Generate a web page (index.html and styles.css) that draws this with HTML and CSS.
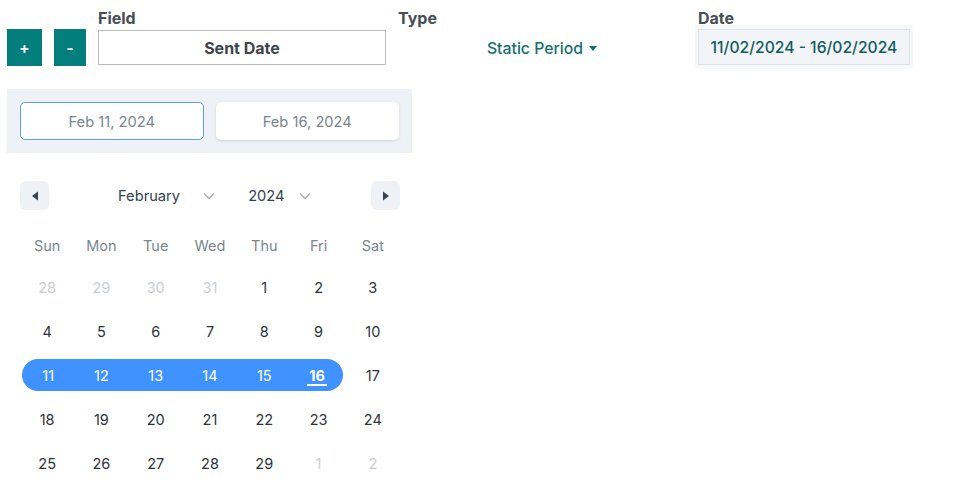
FILE: index.html
```html
<!DOCTYPE html>
<html>
<head>
<meta charset="utf-8">
<link rel="stylesheet" href="styles.css">
</head>
<body>
<div class="toolbar">
  <button class="tbtn plus">+</button>
  <button class="tbtn minus">-</button>
  <div class="group field">
    <div class="label">Field</div>
    <div class="field-box">Sent Date</div>
  </div>
  <div class="group type">
    <div class="label">Type</div>
    <div class="type-val">Static Period <span class="caret"></span></div>
  </div>
  <div class="group date">
    <div class="label">Date</div>
    <div class="date-outer"><div class="date-box">11/02/2024 - 16/02/2024</div></div>
  </div>
</div>

<div class="panel">
  <div class="pin active">Feb 11, 2024</div>
  <div class="pin">Feb 16, 2024</div>
</div>

<div class="cal">
  <div class="cal-head">
    <div class="nav"><svg width="8" height="10" viewBox="0 0 8 10"><path d="M7 0.5 L1 5 L7 9.5Z" fill="#344256"/></svg></div>
    <div class="selects">
      <div class="sel month">February <svg class="chev" width="12" height="8" viewBox="0 0 12 8"><path d="M1 1.5 L6 6.5 L11 1.5" fill="none" stroke="#a6adb6" stroke-width="1.4"/></svg></div>
      <div class="sel year">2024 <svg class="chev" width="12" height="8" viewBox="0 0 12 8"><path d="M1 1.5 L6 6.5 L11 1.5" fill="none" stroke="#a6adb6" stroke-width="1.4"/></svg></div>
    </div>
    <div class="nav"><svg width="8" height="10" viewBox="0 0 8 10"><path d="M1 0.5 L7 5 L1 9.5Z" fill="#344256"/></svg></div>
  </div>
  <div class="grid">
    <div class="wd">Sun</div><div class="wd">Mon</div><div class="wd">Tue</div><div class="wd">Wed</div><div class="wd">Thu</div><div class="wd">Fri</div><div class="wd">Sat</div>
    <div class="d muted">28</div><div class="d muted">29</div><div class="d muted">30</div><div class="d muted">31</div><div class="d">1</div><div class="d">2</div><div class="d">3</div>
    <div class="d">4</div><div class="d">5</div><div class="d">6</div><div class="d">7</div><div class="d">8</div><div class="d">9</div><div class="d">10</div>
    <div class="d sel-start">11</div><div class="d in">12</div><div class="d in">13</div><div class="d in">14</div><div class="d in">15</div><div class="d sel-end"><span class="today">16</span></div><div class="d">17</div>
    <div class="d">18</div><div class="d">19</div><div class="d">20</div><div class="d">21</div><div class="d">22</div><div class="d">23</div><div class="d">24</div>
    <div class="d">25</div><div class="d">26</div><div class="d">27</div><div class="d">28</div><div class="d">29</div><div class="d muted">1</div><div class="d muted">2</div>
  </div>
</div>
</body>
</html>
```
FILE: styles.css
```css
* { box-sizing: border-box; }
body {
  margin: 0;
  background: #fff;
  font-family: Inter, "Noto Sans", sans-serif;
  color: #333a44;
}
.toolbar {
  display: flex;
  align-items: flex-start;
  gap: 12px;
  padding: 8px 0 0 7px;
  height: 89px;
}
.tbtn {
  margin-top: 21px;
  height: 37px;
  border: none;
  background: #047d7d;
  color: #fff;
  font-family: Inter, sans-serif;
  font-size: 16px;
  font-weight: 600;
  padding: 0;
}
.plus { width: 35px; }
.minus { width: 32px; }
.group { display: flex; flex-direction: column; }
.label {
  font-size: 16px;
  font-weight: 700;
  color: #484d57;
  line-height: 20px;
  height: 22px;
}
.field { width: 288px; }
.field-box {
  height: 35px;
  border: 1px solid #bcbcbc;
  display: flex;
  align-items: center;
  justify-content: center;
  font-size: 16px;
  font-weight: 700;
  color: #3f444d;
}
.type { width: 288px; }
.type-val {
  height: 36px;
  display: flex;
  align-items: center;
  justify-content: center;
  font-size: 15.8px;
  font-weight: 500;
  color: #166f6d;
  gap: 6px;
}
.caret {
  width: 0; height: 0;
  border-left: 4.5px solid transparent;
  border-right: 4.5px solid transparent;
  border-top: 5px solid #166f6d;
}
.date .label { height: 17px; }
.date-outer {
  margin-left: -3px;
  background: #f6f7f9;
  padding: 4px 3px;
  width: 218px;
}
.date-box {
  height: 36px;
  background: #f2f4f7;
  border: 1px solid #dfe2e6;
  display: flex;
  align-items: center;
  justify-content: center;
  font-size: 15.7px;
  font-weight: 500;
  color: #0f5c5c;
}
.panel {
  margin-left: 7px;
  width: 405px;
  height: 64px;
  background: #eef1f5;
  display: flex;
  gap: 12px;
  padding: 13px;
}
.pin {
  width: 184px;
  height: 38px;
  background: #fff;
  border-radius: 5px;
  box-shadow: 0 1px 3px rgba(0,0,0,0.12);
  display: flex;
  align-items: center;
  justify-content: center;
  font-size: 14.7px;
  color: #7b858f;
  padding-top: 1px;
}
.pin.active {
  border: 1.5px solid #5b9cf2;
  box-shadow: none;
}
.cal {
  margin: 28px 0 0 20px;
  width: 380px;
}
.cal-head {
  display: flex;
  align-items: center;
  height: 29px;
}
.nav {
  width: 29px;
  height: 29px;
  border-radius: 6px;
  background: #eef1f5;
  display: flex;
  align-items: center;
  justify-content: center;
}
.selects { display: flex; gap: 33px; margin-left: 69px; flex: 1; }
.sel {
  display: flex;
  align-items: center;
  font-size: 14.7px;
  color: #364150;
}
.month { gap: 23px; }
.year { gap: 14px; }
.grid {
  margin-top: 20px;
  display: grid;
  grid-template-columns: repeat(7, 1fr);
  grid-template-rows: 35px repeat(5, 44px);
}
.wd {
  font-size: 14.5px;
  color: #7b858f;
  display: flex;
  align-items: center;
  justify-content: center;
  height: 30px;
  align-self: start;
}
.d {
  display: flex;
  align-items: center;
  justify-content: center;
  font-size: 14.5px;
  color: #2c323a;
}
.d.muted { color: #c9ced5; }
.sel-start, .in, .sel-end {
  color: #fff;
  background: #3f92ff;
  height: 32px;
  align-self: center;
}
.sel-start { border-radius: 16px 0 0 16px; margin-left: 2px; }
.sel-end { border-radius: 0 16px 16px 0; margin-right: 3px; }
.today {
  font-weight: 700;
  border-bottom: 2px solid #fff;
  padding: 0 2px;
  line-height: 17px;
  margin-top: 2px;
}
```
